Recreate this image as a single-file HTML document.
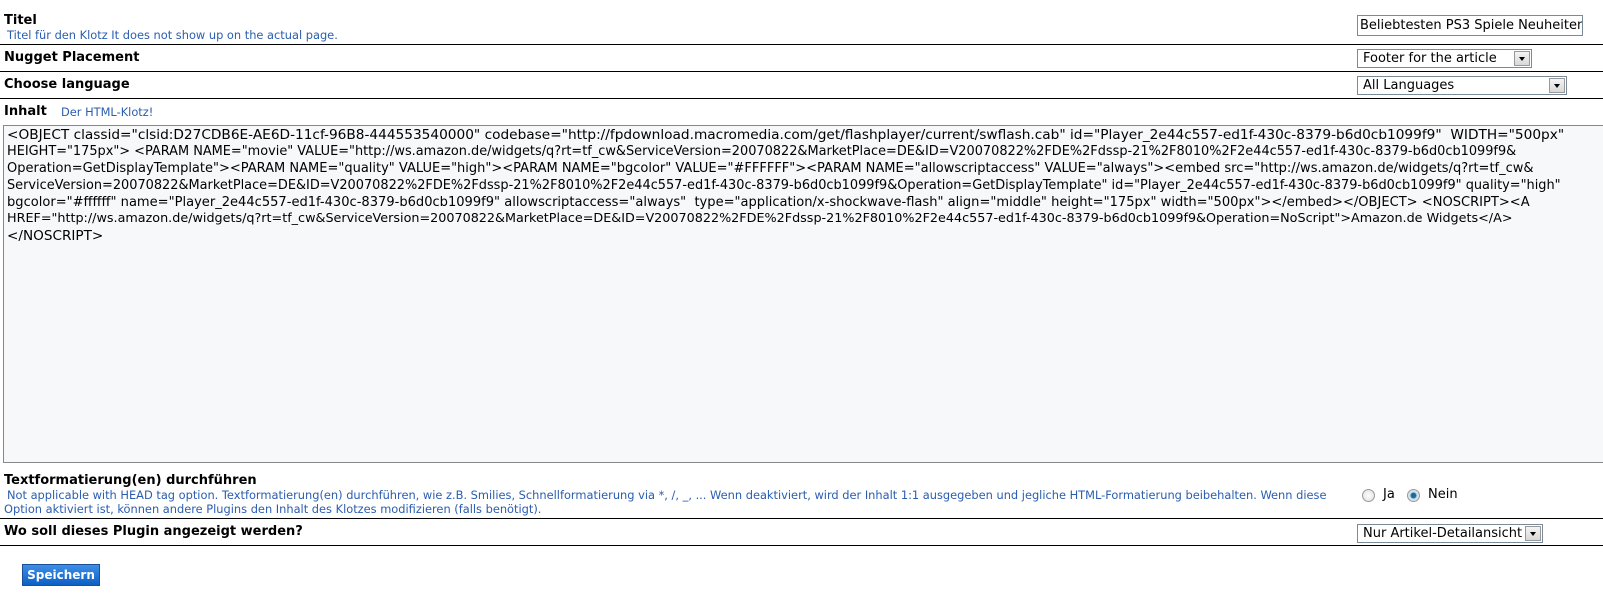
<!DOCTYPE html>
<html><head><meta charset="utf-8"><style>
body{margin:0;width:1603px;height:593px;background:#fff;font-family:"DejaVu Sans","Liberation Sans",sans-serif;position:relative;overflow:hidden}
.a{position:absolute;white-space:nowrap}
.h{font-weight:bold;font-size:13px;color:#000}
.b{font-size:11.4px;color:#2a5db0}
.hr{position:absolute;left:0;width:1603px;height:1px;background:#000}
.sel{position:absolute;border:1px solid #7a8a99;background:#fff;font-size:13px;height:19px;box-sizing:border-box;padding-left:5px;line-height:17px}
.arr{position:absolute;right:1px;top:1px;width:16px;height:15px;background:linear-gradient(#f4f4f4,#d8d8d8);border:1px solid #999;box-sizing:border-box}
.arr:after{content:"";position:absolute;left:4px;top:5px;border-left:3.5px solid transparent;border-right:3.5px solid transparent;border-top:4px solid #000}
.ta{position:absolute;left:3px;top:125px;width:1600px;height:338px;border:1px solid #888;border-right:none;background:#f7f8fa;box-sizing:border-box;font-size:13.6px;line-height:16.9px;padding:1px 0 0 3px;color:#000}
.ta div{white-space:nowrap;height:16.9px}
.rad{position:absolute;width:11px;height:11px;border-radius:50%;border:1px solid #999;background:radial-gradient(#fff,#ddd)}
</style></head><body>
<div class="a h" style="left:4px;top:13px">Titel</div>
<div class="a b" style="left:7px;top:28px">Titel für den Klotz It does not show up on the actual page.</div>
<div style="position:absolute;left:1357px;top:15px;width:226px;height:21px;border:1px solid #7a8a99;box-sizing:border-box;font-size:13px;line-height:19px;padding-left:2px;overflow:hidden;white-space:nowrap">Beliebtesten PS3 Spiele Neuheiten</div>
<div class="hr" style="top:44px"></div>
<div class="a h" style="left:4px;top:50px">Nugget Placement</div>
<div class="sel" style="left:1357px;top:49px;width:175px">Footer for the article<div class="arr"></div></div>
<div class="hr" style="top:71px"></div>
<div class="a h" style="left:4px;top:77px">Choose language</div>
<div class="sel" style="left:1357px;top:76px;width:210px">All Languages<div class="arr"></div></div>
<div class="hr" style="top:98px"></div>
<div class="a h" style="left:4px;top:104px">Inhalt</div>
<div class="a b" style="left:61px;top:105px">Der HTML-Klotz!</div>
<div class="ta">
<div style="font-size:13.7px">&lt;OBJECT classid="clsid:D27CDB6E-AE6D-11cf-96B8-444553540000" codebase="http://fpdownload.macromedia.com/get/flashplayer/current/swflash.cab" id="Player_2e44c557-ed1f-430c-8379-b6d0cb1099f9"&nbsp; WIDTH="500px"</div>
<div style="font-size:12.9px">HEIGHT="175px"&gt; &lt;PARAM NAME="movie" VALUE="http://ws.amazon.de/widgets/q?rt=tf_cw&amp;ServiceVersion=20070822&amp;MarketPlace=DE&amp;ID=V20070822%2FDE%2Fdssp-21%2F8010%2F2e44c557-ed1f-430c-8379-b6d0cb1099f9&amp;</div>
<div style="font-size:13px">Operation=GetDisplayTemplate"&gt;&lt;PARAM NAME="quality" VALUE="high"&gt;&lt;PARAM NAME="bgcolor" VALUE="#FFFFFF"&gt;&lt;PARAM NAME="allowscriptaccess" VALUE="always"&gt;&lt;embed src="http://ws.amazon.de/widgets/q?rt=tf_cw&amp;</div>
<div style="font-size:12.9px">ServiceVersion=20070822&amp;MarketPlace=DE&amp;ID=V20070822%2FDE%2Fdssp-21%2F8010%2F2e44c557-ed1f-430c-8379-b6d0cb1099f9&amp;Operation=GetDisplayTemplate" id="Player_2e44c557-ed1f-430c-8379-b6d0cb1099f9" quality="high"</div>
<div style="font-size:13.05px">bgcolor="#ffffff" name="Player_2e44c557-ed1f-430c-8379-b6d0cb1099f9" allowscriptaccess="always"&nbsp; type="application/x-shockwave-flash" align="middle" height="175px" width="500px"&gt;&lt;/embed&gt;&lt;/OBJECT&gt; &lt;NOSCRIPT&gt;&lt;A</div>
<div style="font-size:12.75px">HREF="http://ws.amazon.de/widgets/q?rt=tf_cw&amp;ServiceVersion=20070822&amp;MarketPlace=DE&amp;ID=V20070822%2FDE%2Fdssp-21%2F8010%2F2e44c557-ed1f-430c-8379-b6d0cb1099f9&amp;Operation=NoScript"&gt;Amazon.de Widgets&lt;/A&gt;</div>
<div>&lt;/NOSCRIPT&gt;</div>
</div>
<div class="a h" style="left:4px;top:473px">Textformatierung(en) durchführen</div>
<div class="a b" style="left:7px;top:488px">Not applicable with HEAD tag option. Textformatierung(en) durchführen, wie z.B. Smilies, Schnellformatierung via *, /, _, ... Wenn deaktiviert, wird der Inhalt 1:1 ausgegeben und jegliche HTML-Formatierung beibehalten. Wenn diese</div>
<div class="a b" style="left:4px;top:502px">Option aktiviert ist, können andere Plugins den Inhalt des Klotzes modifizieren (falls benötigt).</div>
<div class="rad" style="left:1362px;top:489px"></div>
<div class="a" style="left:1383px;top:487px;font-size:13px">Ja</div>
<div class="rad" style="left:1407px;top:489px;background:radial-gradient(#1a6a9a 30%,#cde 45%,#eee)"></div>
<div class="a" style="left:1428px;top:487px;font-size:13px">Nein</div>
<div class="hr" style="top:518px"></div>
<div class="a h" style="left:4px;top:524px">Wo soll dieses Plugin angezeigt werden?</div>
<div class="sel" style="left:1357px;top:524px;width:186px">Nur Artikel-Detailansicht<div class="arr"></div></div>
<div class="hr" style="top:545px"></div>
<div class="a" style="left:22px;top:564px;width:78px;height:22px;background:linear-gradient(#3d8ee6,#0d5fc4);border:1px solid #1c4f99;box-sizing:border-box;color:#fff;font-weight:bold;font-size:12px;text-align:center;line-height:20px">Speichern</div>
</body></html>
